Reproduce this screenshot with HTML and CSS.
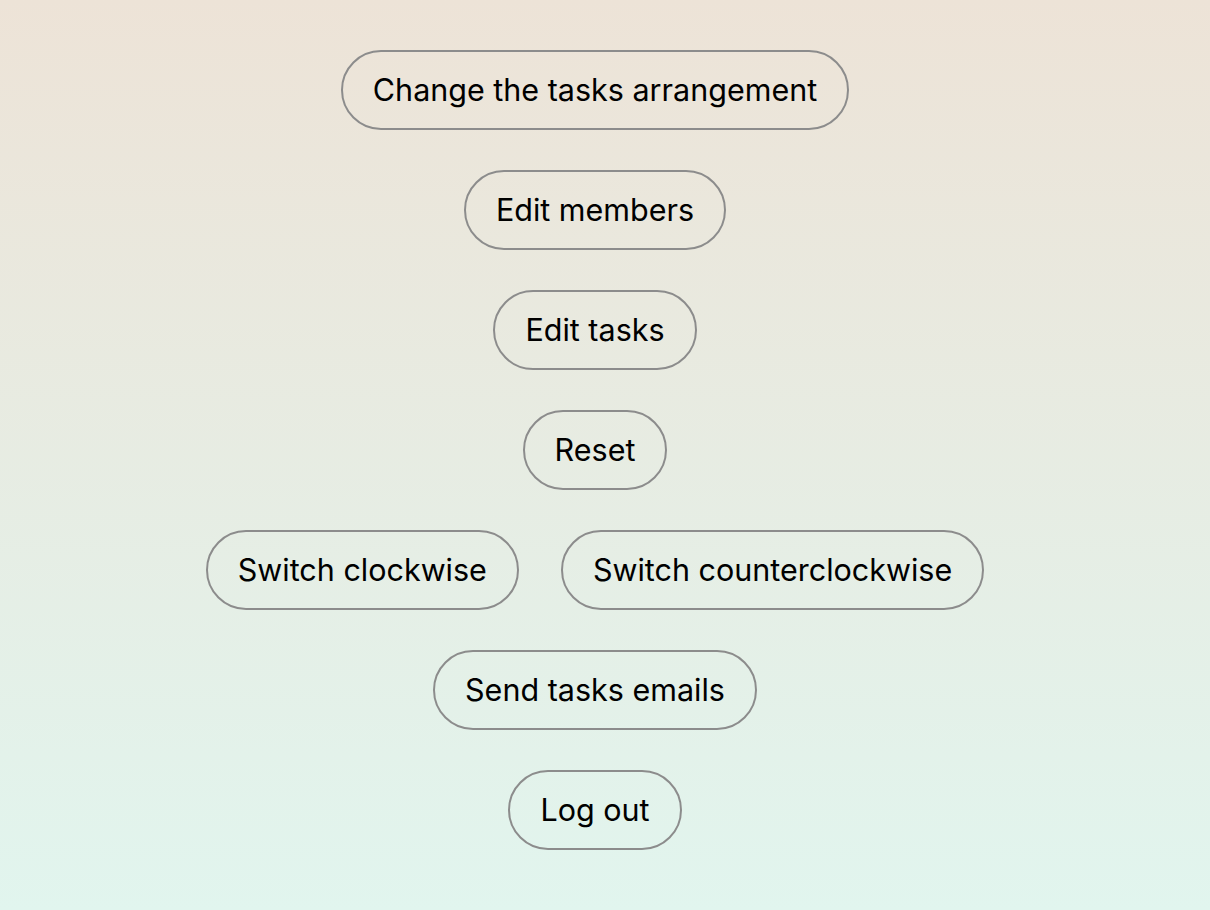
FILE: index.html
```html
<!DOCTYPE html>
<html lang="en">
<head>
<meta charset="utf-8">
<title>Menu</title>
<link rel="stylesheet" href="styles.css">
</head>
<body>
<main class="menu">
  <div class="row"><button class="pill">Change the tasks arrangement</button></div>
  <div class="row"><button class="pill">Edit members</button></div>
  <div class="row"><button class="pill">Edit tasks</button></div>
  <div class="row"><button class="pill">Reset</button></div>
  <div class="row"><button class="pill">Switch clockwise</button><button class="pill">Switch counterclockwise</button></div>
  <div class="row"><button class="pill">Send tasks emails</button></div>
  <div class="row"><button class="pill">Log out</button></div>
</main>
</body>
</html>
```
FILE: styles.css
```css
html, body {
  margin: 0;
  padding: 0;
  height: 100%;
}
body {
  background: linear-gradient(to bottom, #ede3d7 0%, #e1f5ee 100%);
  font-family: Inter, "Noto Sans", sans-serif;
}
.menu {
  display: flex;
  flex-direction: column;
  align-items: center;
  gap: 40px;
  padding: 50px 20px 0 0;
}
.row {
  display: flex;
  justify-content: center;
  gap: 42px;
}
.pill {
  box-sizing: border-box;
  height: 80px;
  padding: 1px 30px 0;
  border: 2px solid #8c8c8c;
  border-radius: 999px;
  background: transparent;
  font-family: inherit;
  font-size: 30.5px;
  color: #000;
  line-height: 1;
}
```
